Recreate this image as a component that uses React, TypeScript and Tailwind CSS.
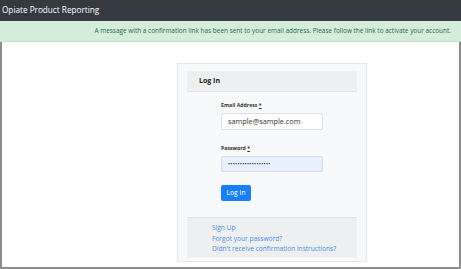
import React from "react";

export default function App() {
  return (
    <div className="w-[461px] h-[269px] bg-white overflow-hidden flex flex-col" style={{ fontFamily: '"Open Sans", "Noto Sans", sans-serif' }}>
      <div className="h-[21px] bg-[#343a40] flex items-center pl-[2px] text-white text-[8.2px] shrink-0">
        Opiate Product Reporting
      </div>
      <div className="h-[21px] bg-[#d4edda] border-b border-[#c3e6cb] flex items-center justify-end pr-[10px] text-[#2a6b3c] text-[6.45px] shrink-0 whitespace-nowrap">
        A message with a confirmation link has been sent to your email address. Please follow the link to activate your account.
      </div>
      <div className="flex-1 border-l-2 border-r-2 border-b-2 border-[#8c8c8c] pt-[21px] pl-[175px]">
        <div className="w-[190px] h-[199px] bg-[#f8f9fa] border border-[#e6e7e8] px-[9px] pt-[7px] flex flex-col">
          <div className="h-[21px] bg-[#eeeff0] border-b border-[#e2e3e4] flex items-center pl-[12px] text-[7px] font-bold text-[#222]">
            Log In
          </div>
          <div className="pl-[34px] pt-[9px] flex flex-col">
            <div className="text-[5.2px] font-bold text-[#333] leading-[8px] whitespace-nowrap">
              Email Address <span className="underline">*</span>
            </div>
            <div className="mt-[4px] w-[102px] h-[17px] bg-white border border-[#dcdfe2] rounded-[2px] flex items-center pl-[6px] text-[7.3px] text-[#333]">
              sample@sample.com
            </div>
            <div className="mt-[14px] text-[5.2px] font-bold text-[#333] leading-[8px] whitespace-nowrap">
              Password <span className="underline">*</span>
            </div>
            <div className="mt-[4px] w-[102px] h-[16px] bg-[#e8f0fe] border border-[#d5dcea] rounded-[2px] flex items-center pl-[6px] text-[5.5px] text-[#111] tracking-[0.3px] whitespace-nowrap overflow-hidden">
              ••••••••••••••••••
            </div>
            <div className="mt-[13px] w-[30px] h-[16px] bg-[#1a7ff5] rounded-[2px] flex items-center justify-center text-white text-[6.8px]">
              Log In
            </div>
          </div>
          <div className="mt-[16px] h-[41px] bg-[#eeeff0] border-t border-[#e2e3e4] pl-[25px] pt-[5px] flex flex-col text-[6.6px] leading-[10.5px] text-[#4a90e2] whitespace-nowrap">
            <span>Sign Up</span>
            <span>Forgot your password?</span>
            <span>Didn't receive confirmation instructions?</span>
          </div>
        </div>
      </div>
    </div>
  );
}
